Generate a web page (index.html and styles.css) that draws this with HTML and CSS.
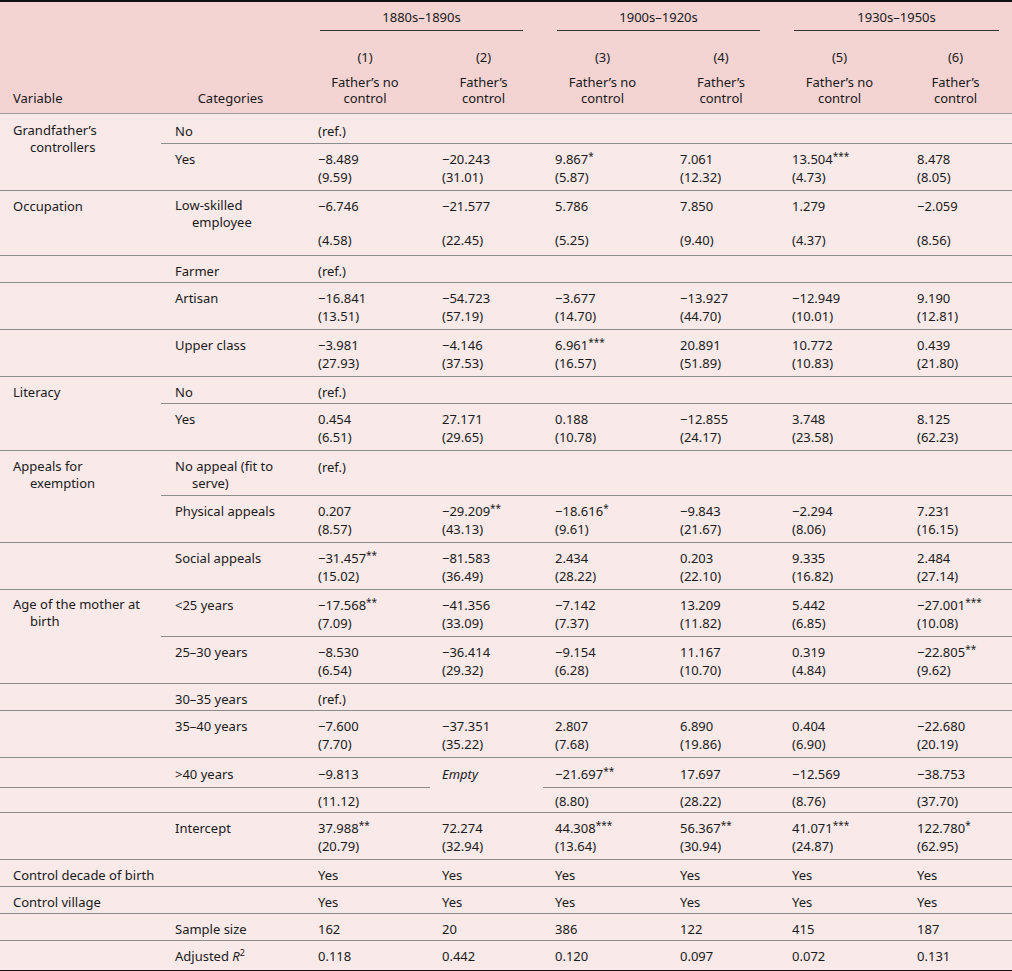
FILE: index.html
```html
<!DOCTYPE html>
<html lang="en">
<head>
    <meta charset="UTF-8">
    <meta name="viewport" content="width=device-width, initial-scale=1.0">
    <title>Regression table</title>
    <link rel="stylesheet" href="styles.css">
</head>
<body>
<div class="wrap">
<table class="results">
    <colgroup>
        <col style="width:161px"><col style="width:145px">
        <col style="width:124px"><col style="width:113px">
        <col style="width:125px"><col style="width:112px">
        <col style="width:125px"><col style="width:107px">
    </colgroup>
    <thead>
        <tr class="h1">
            <td rowspan="3" class="var hline">Variable</td>
            <td rowspan="3" class="cat hline">Categories</td>
            <td colspan="2" class="group"><div>1880s–1890s</div></td>
            <td colspan="2" class="group"><div>1900s–1920s</div></td>
            <td colspan="2" class="group last"><div>1930s–1950s</div></td>
        </tr>
        <tr class="h2">
            <td>(1)</td><td>(2)</td><td>(3)</td><td>(4)</td><td>(5)</td><td>(6)</td>
        </tr>
        <tr class="h3">
            <td>Father’s no<br>control</td>
            <td>Father’s<br>control</td>
            <td>Father’s no<br>control</td>
            <td>Father’s<br>control</td>
            <td>Father’s no<br>control</td>
            <td>Father’s<br>control</td>
        </tr>
    </thead>
    <tbody>
        <!-- grandfather -->
        <tr class="one first rule">
            <td rowspan="3" class="hang rule">Grandfather’s controllers</td>
            <td class="cat">No</td><td>(ref.)</td><td></td><td></td><td></td><td></td><td></td>
        </tr>
        <tr class="top">
            <td class="cat">Yes</td><td>−8.489</td><td>−20.243</td><td>9.867<sup>*</sup></td><td>7.061</td><td>13.504<sup>***</sup></td><td>8.478</td>
        </tr>
        <tr class="bot rule">
            <td></td><td>(9.59)</td><td>(31.01)</td><td>(5.87)</td><td>(12.32)</td><td>(4.73)</td><td>(8.05)</td>
        </tr>

        <!-- occupation -->
        <tr class="top">
            <td class="var">Occupation</td>
            <td class="cat hang">Low-skilled employee</td><td>−6.746</td><td>−21.577</td><td>5.786</td><td>7.850</td><td>1.279</td><td>−2.059</td>
        </tr>
        <tr class="bot tall rule">
            <td></td><td></td><td>(4.58)</td><td>(22.45)</td><td>(5.25)</td><td>(9.40)</td><td>(4.37)</td><td>(8.56)</td>
        </tr>
        <tr class="one rule">
            <td></td><td class="cat">Farmer</td><td>(ref.)</td><td></td><td></td><td></td><td></td><td></td>
        </tr>
        <tr class="top">
            <td></td><td class="cat">Artisan</td><td>−16.841</td><td>−54.723</td><td>−3.677</td><td>−13.927</td><td>−12.949</td><td>9.190</td>
        </tr>
        <tr class="bot rule">
            <td></td><td></td><td>(13.51)</td><td>(57.19)</td><td>(14.70)</td><td>(44.70)</td><td>(10.01)</td><td>(12.81)</td>
        </tr>
        <tr class="top">
            <td></td><td class="cat">Upper class</td><td>−3.981</td><td>−4.146</td><td>6.961<sup>***</sup></td><td>20.891</td><td>10.772</td><td>0.439</td>
        </tr>
        <tr class="bot rule">
            <td></td><td></td><td>(27.93)</td><td>(37.53)</td><td>(16.57)</td><td>(51.89)</td><td>(10.83)</td><td>(21.80)</td>
        </tr>

        <!-- literacy -->
        <tr class="one rule">
            <td rowspan="3" class="var rule">Literacy</td>
            <td class="cat">No</td><td>(ref.)</td><td></td><td></td><td></td><td></td><td></td>
        </tr>
        <tr class="top">
            <td class="cat">Yes</td><td>0.454</td><td>27.171</td><td>0.188</td><td>−12.855</td><td>3.748</td><td>8.125</td>
        </tr>
        <tr class="bot rule">
            <td></td><td>(6.51)</td><td>(29.65)</td><td>(10.78)</td><td>(24.17)</td><td>(23.58)</td><td>(62.23)</td>
        </tr>

        <!-- appeals -->
        <tr class="wrapped rule">
            <td rowspan="3" class="hang rule">Appeals for exemption</td>
            <td class="cat hang">No appeal (fit to serve)</td><td>(ref.)</td><td></td><td></td><td></td><td></td><td></td>
        </tr>
        <tr class="top">
            <td class="cat">Physical appeals</td><td>0.207</td><td>−29.209<sup>**</sup></td><td>−18.616<sup>*</sup></td><td>−9.843</td><td>−2.294</td><td>7.231</td>
        </tr>
        <tr class="bot rule">
            <td></td><td>(8.57)</td><td>(43.13)</td><td>(9.61)</td><td>(21.67)</td><td>(8.06)</td><td>(16.15)</td>
        </tr>
        <tr class="top">
            <td></td><td class="cat">Social appeals</td><td>−31.457<sup>**</sup></td><td>−81.583</td><td>2.434</td><td>0.203</td><td>9.335</td><td>2.484</td>
        </tr>
        <tr class="bot rule">
            <td></td><td></td><td>(15.02)</td><td>(36.49)</td><td>(28.22)</td><td>(22.10)</td><td>(16.82)</td><td>(27.14)</td>
        </tr>

        <!-- mother age -->
        <tr class="top">
            <td rowspan="4" class="hang rule">Age of the mother at birth</td>
            <td class="cat">&lt;25 years</td><td>−17.568<sup>**</sup></td><td>−41.356</td><td>−7.142</td><td>13.209</td><td>5.442</td><td>−27.001<sup>***</sup></td>
        </tr>
        <tr class="bot rule">
            <td></td><td>(7.09)</td><td>(33.09)</td><td>(7.37)</td><td>(11.82)</td><td>(6.85)</td><td>(10.08)</td>
        </tr>
        <tr class="top">
            <td class="cat">25–30 years</td><td>−8.530</td><td>−36.414</td><td>−9.154</td><td>11.167</td><td>0.319</td><td>−22.805<sup>**</sup></td>
        </tr>
        <tr class="bot rule">
            <td></td><td>(6.54)</td><td>(29.32)</td><td>(6.28)</td><td>(10.70)</td><td>(4.84)</td><td>(9.62)</td>
        </tr>
        <tr class="one rule">
            <td></td><td class="cat">30–35 years</td><td>(ref.)</td><td></td><td></td><td></td><td></td><td></td>
        </tr>
        <tr class="top">
            <td></td><td class="cat">35–40 years</td><td>−7.600</td><td>−37.351</td><td>2.807</td><td>6.890</td><td>0.404</td><td>−22.680</td>
        </tr>
        <tr class="bot rule">
            <td></td><td></td><td>(7.70)</td><td>(35.22)</td><td>(7.68)</td><td>(19.86)</td><td>(6.90)</td><td>(20.19)</td>
        </tr>
        <tr class="split rule">
            <td></td><td class="cat">&gt;40 years</td><td>−9.813</td><td rowspan="2" class="empty rule">Empty</td><td>−21.697<sup>**</sup></td><td>17.697</td><td>−12.569</td><td>−38.753</td>
        </tr>
        <tr class="split-se rule">
            <td></td><td></td><td>(11.12)</td><td>(8.80)</td><td>(28.22)</td><td>(8.76)</td><td>(37.70)</td>
        </tr>

        <!-- intercept and controls -->
        <tr class="top">
            <td></td><td class="cat">Intercept</td><td>37.988<sup>**</sup></td><td>72.274</td><td>44.308<sup>***</sup></td><td>56.367<sup>**</sup></td><td>41.071<sup>***</sup></td><td>122.780<sup>*</sup></td>
        </tr>
        <tr class="bot rule">
            <td></td><td></td><td>(20.79)</td><td>(32.94)</td><td>(13.64)</td><td>(30.94)</td><td>(24.87)</td><td>(62.95)</td>
        </tr>
        <tr class="one rule">
            <td colspan="2" class="var">Control decade of birth</td><td>Yes</td><td>Yes</td><td>Yes</td><td>Yes</td><td>Yes</td><td>Yes</td>
        </tr>
        <tr class="one rule">
            <td colspan="2" class="var">Control village</td><td>Yes</td><td>Yes</td><td>Yes</td><td>Yes</td><td>Yes</td><td>Yes</td>
        </tr>
        <tr class="one rule">
            <td></td><td class="cat">Sample size</td><td>162</td><td>20</td><td>386</td><td>122</td><td>415</td><td>187</td>
        </tr>
        <tr class="one last-row">
            <td></td><td class="cat">Adjusted <i>R</i><sup class="pow">2</sup></td><td>0.118</td><td>0.442</td><td>0.120</td><td>0.097</td><td>0.072</td><td>0.131</td>
        </tr>
    </tbody>
</table>
</div>
</body>
</html>
```

FILE: styles.css
```css
body{
    margin: 0;
    background: #fff;
}
.wrap{
    width: 1012px;
    border-top: 2px solid #111;
    border-bottom: 2px solid #111;
}
.results{
    width: 1012px;
    table-layout: fixed;
    border-collapse: collapse;
    font-family: "Noto Sans", sans-serif;
    font-size: 13px;
    color: #1a1a1a;
    background-color: #f9e9e9;
}
.results td{
    padding: 0 12px;
    line-height: 18px;
    vertical-align: top;
    text-align: left;
    white-space: nowrap;
}
.results td.var{
    padding-left: 13px;
}
.results td.cat{
    padding-left: 14px;
}
.results td.hang{
    white-space: normal;
    padding-left: 30px;
    text-indent: -17px;
    line-height: 17px;
}
.results td.cat.hang{
    padding-left: 31px;
}
sup{
    font-size: 10px;
    line-height: 0;
    vertical-align: 4px;
}
sup.pow{
    font-size: 9px;
    vertical-align: 5px;
}

/* header */
.results thead td{
    background-color: #f4d3d3;
    text-align: center;
    padding: 0 20px 0 14px;
}
.results thead td.var{
    text-align: left;
    padding-left: 13px;
}
.results thead td.var,
.results thead td.cat{
    vertical-align: bottom;
    line-height: 16px;
    padding-bottom: 7px;
}
.results thead td.hline{
    border-bottom: 1px solid #9a9a9a;
}
.h1 td.group{
    padding-top: 6px;
}
.h1 td.group.last{
    padding-right: 13px;
}
.h1 td.group div{
    padding-bottom: 4px;
    border-bottom: 1px solid #333;
}
.h2 td{
    padding-top: 17px !important;
}
.h3 td{
    line-height: 16px;
    padding-top: 8px !important;
    padding-bottom: 7px !important;
    border-bottom: 1px solid #9a9a9a;
}

/* body rows */
.one td{
    padding-top: 6px;
    padding-bottom: 2px;
}
.first td{
    padding-top: 8px;
    padding-bottom: 3px;
}
.last-row td{
    padding-bottom: 5px;
}
.top td{
    padding-top: 6px;
}
.bot td{
    padding-bottom: 4px;
}
.bot.tall td{
    padding-bottom: 6px;
}
.wrapped td{
    padding-top: 7px;
    padding-bottom: 3px;
}
.split td{
    padding-top: 7px;
    padding-bottom: 4px;
}
.split-se td{
    padding-top: 4px;
    padding-bottom: 2px;
}
.results td.empty{
    font-style: italic;
    padding-top: 7px;
}
.rule > td,
.results td.rule{
    border-bottom: 1px solid #8c8c8c;
}
```
